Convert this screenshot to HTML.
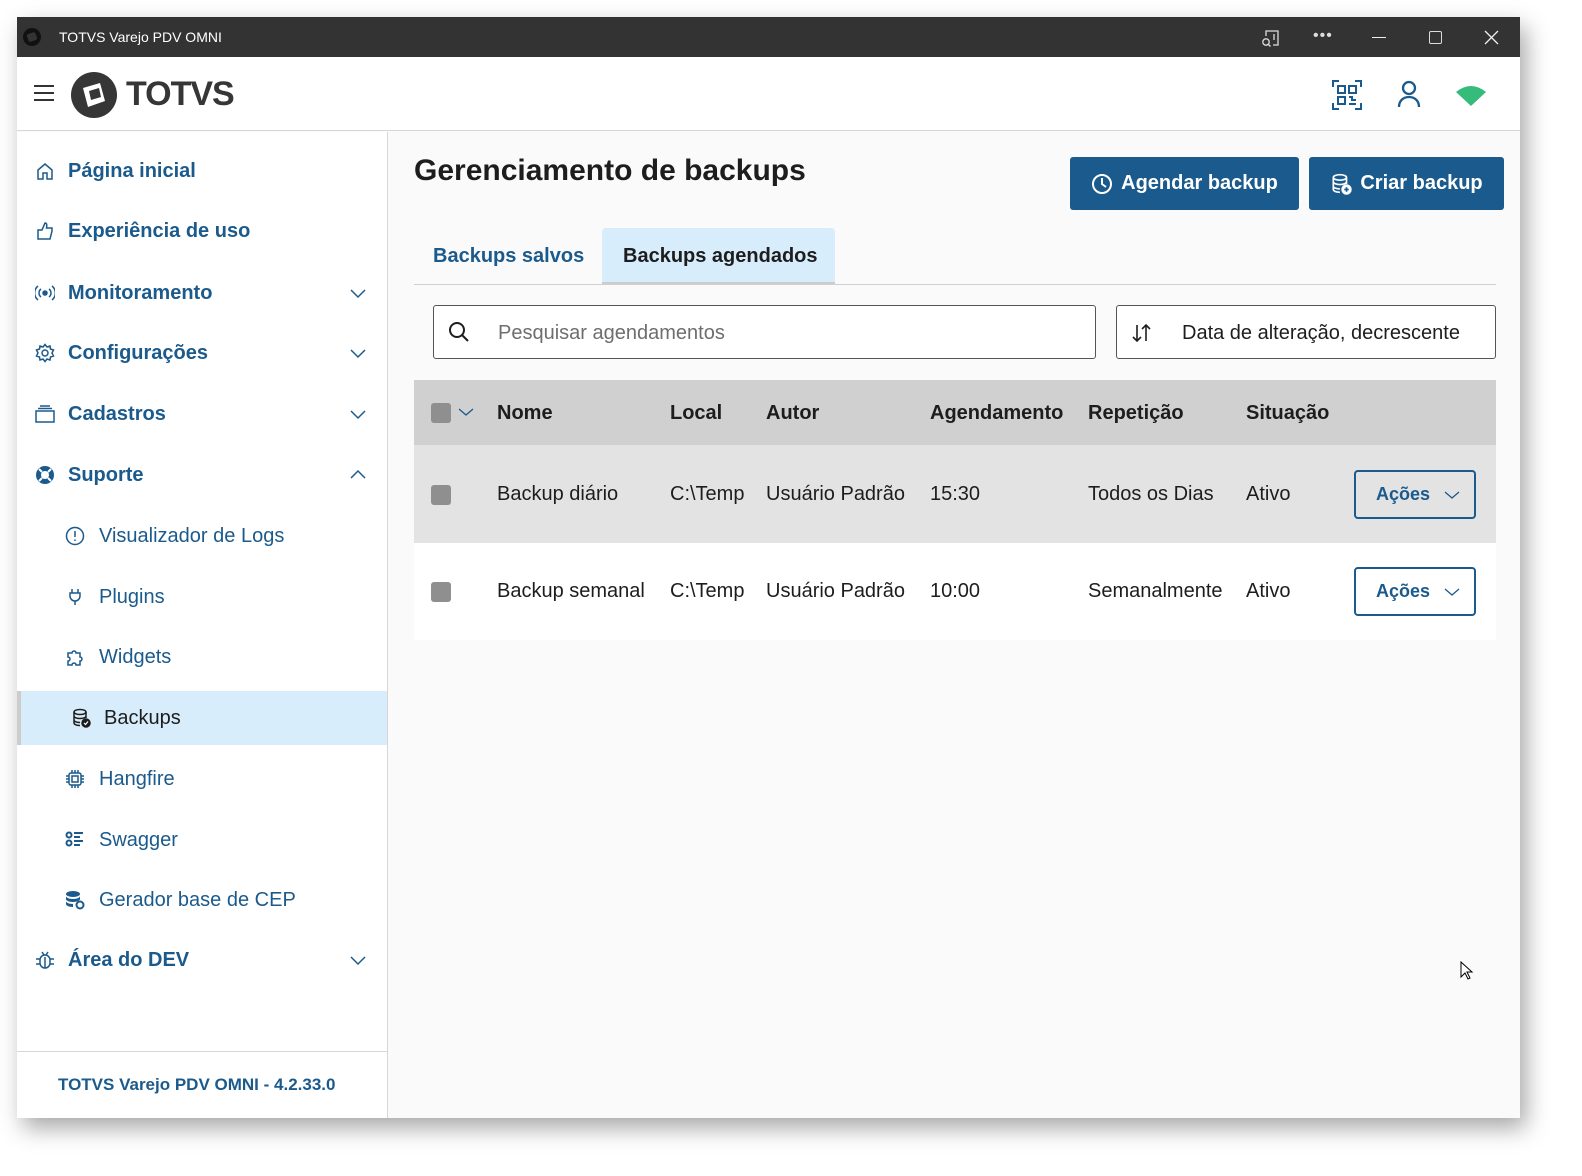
<!DOCTYPE html>
<html><head><meta charset="utf-8">
<style>
*{margin:0;padding:0;box-sizing:border-box}
body{width:1582px;height:1176px;background:#fff;position:relative;overflow:hidden;font-family:"Liberation Sans",Arial,sans-serif}
.a{position:absolute}
#win{left:17px;top:17px;width:1503px;height:1101px;background:#fafafa;box-shadow:6px 10px 22px rgba(0,0,0,.35);overflow:hidden}
#tb{left:0;top:0;width:1503px;height:40px;background:#333;color:#fff;font-size:14px}
#hd{left:0;top:40px;width:1503px;height:74px;background:#fff;border-bottom:1px solid #d6d6d6}
#sb{left:0;top:115px;width:371px;height:986px;background:#fff;border-right:1px solid #d6d6d6}
.it{position:absolute;left:0;width:370px;height:54px;display:flex;align-items:center;color:#1b5a8c;font-size:20px}
.it.b{font-weight:bold;padding-left:51px}
.it.s{padding-left:82px}
.it svg.ic{position:absolute;width:20px;height:20px}
.it.b svg.ic{left:18px}
.it.s svg.ic{left:48px}
.chev{position:absolute;left:331px;width:20px;height:20px}
.btn{position:absolute;top:140px;height:53px;background:#1b5a8c;color:#fff;border-radius:3px;font-weight:bold;font-size:20px;display:flex;align-items:center;justify-content:center;gap:8px}
.cell{position:absolute;font-size:20px;color:#1d1d1d}
.cb{position:absolute;left:414px;width:20px;height:20px;background:#8f8f8f;border-radius:3px}
.ac{position:absolute;left:1337px;width:122px;height:49px;border:2px solid #1b5a8c;border-radius:4px;color:#1b5a8c;font-weight:bold;font-size:18px;display:flex;align-items:center;padding-left:20px;gap:14px}
</style></head><body>
<div id="win" class="a">
 <div id="tb" class="a">
  <svg class="a" style="left:5px;top:10px" width="20" height="20" viewBox="0 0 20 20"><circle cx="10" cy="10" r="9" fill="#111"/><rect x="5.5" y="6" width="9" height="8" rx="2" fill="#333" transform="rotate(-20 10 10)"/></svg>
  <div class="a" style="left:42px;top:12px">TOTVS Varejo PDV OMNI</div>
  <svg class="a" style="left:1243px;top:11px" width="20" height="20" viewBox="0 0 20 20" fill="none" stroke="#ddd" stroke-width="1.3"><path d="M6 8V3h12v14h-5"/><path d="M14 6v6"/><circle cx="6" cy="14" r="3.2"/><path d="M8.5 16.5l2 2"/></svg>
  <div class="a" style="left:1296px;top:10px;font-size:16px;letter-spacing:1px;color:#ddd">•••</div>
  <div class="a" style="left:1355px;top:20px;width:14px;height:1px;background:#eee"></div>
  <div class="a" style="left:1412px;top:14px;width:13px;height:13px;border:1.3px solid #ddd;border-radius:2px"></div>
  <svg class="a" style="left:1467px;top:13px" width="15" height="15" viewBox="0 0 15 15" stroke="#eee" stroke-width="1.3"><path d="M1 1l13 13M14 1L1 14"/></svg>
 </div>
 <div id="hd" class="a">
  <div class="a" style="left:17px;top:28px;width:20px;height:2px;background:#333;box-shadow:0 7px 0 #333,0 14px 0 #333"></div>
  <svg class="a" style="left:53px;top:14px" width="48" height="48" viewBox="0 0 48 48"><circle cx="24" cy="24" r="23" fill="#363636"/><path d="M13 17l17-5 5 18-17 6z" fill="#fff"/><path d="M19 20l10-3 2 9-10 3z" fill="#363636"/></svg>
  <div class="a" style="left:109px;top:18px;font-size:34px;font-weight:bold;color:#363636;letter-spacing:-1px">TOTVS</div>
  <svg class="a" style="left:1315px;top:23px" width="30" height="30" viewBox="0 0 30 30" fill="none" stroke="#1b5a8c" stroke-width="2"><path d="M1 7V1h6M23 1h6v6M29 23v6h-6M7 29H1v-6"/><rect x="6" y="6" width="7" height="7"/><rect x="17" y="6" width="7" height="7"/><rect x="6" y="17" width="7" height="7"/><path d="M17 17h3v3h4M17 24h7"/></svg>
  <svg class="a" style="left:1380px;top:23px" width="24" height="28" viewBox="0 0 24 28" fill="none" stroke="#1b5a8c" stroke-width="2.3"><circle cx="12" cy="8" r="6"/><path d="M2 27c0-6 4-10 10-10s10 4 10 10"/></svg>
  <svg class="a" style="left:1438px;top:27px" width="32" height="22" viewBox="0 0 32 22"><path d="M1 8Q16-4 31 8L16 22z" fill="#35bb7a"/></svg>
 </div>
 <div id="sb" class="a">
  <div class="it b" style="top:12px"><svg class="ic" viewBox="0 0 20 20" fill="none" stroke="#1b5a8c" stroke-width="1.5"><path d="M3 9l7-6 7 6v9h-5v-6H8v6H3z"/></svg>Página inicial</div>
  <div class="it b" style="top:72px"><svg class="ic" viewBox="0 0 20 20" fill="none" stroke="#1b5a8c" stroke-width="1.5"><path d="M3 9h4l3-7c2 0 2 2 1.5 5H17v3l-2 8H3z"/></svg>Experiência de uso</div>
  <div class="it b" style="top:134px"><svg class="ic" viewBox="0 0 20 20" fill="none" stroke="#1b5a8c" stroke-width="1.5"><circle cx="10" cy="10" r="2" fill="#1b5a8c"/><path d="M6 6a5 5 0 000 8M14 6a5 5 0 010 8M3 3a9 9 0 000 14M17 3a9 9 0 010 14"/></svg>Monitoramento<svg class="chev" viewBox="0 0 20 20" fill="none" stroke="#1b5a8c" stroke-width="1.5"><path d="M3 7l7 7 7-7"/></svg></div>
  <div class="it b" style="top:194px"><svg class="ic" viewBox="0 0 20 20" fill="none" stroke="#1b5a8c" stroke-width="1.5"><circle cx="10" cy="10" r="3"/><path d="M10 1.5l2 2.5 3-1 .5 3 3 1-1.5 3 1.5 3-3 1-.5 3-3-1-2 2.5-2-2.5-3 1-.5-3-3-1 1.5-3-1.5-3 3-1 .5-3 3 1z"/></svg>Configurações<svg class="chev" viewBox="0 0 20 20" fill="none" stroke="#1b5a8c" stroke-width="1.5"><path d="M3 7l7 7 7-7"/></svg></div>
  <div class="it b" style="top:255px"><svg class="ic" viewBox="0 0 20 20" fill="none" stroke="#1b5a8c" stroke-width="1.5"><rect x="1" y="7" width="18" height="11"/><path d="M3 4.5h14M5 2h10"/></svg>Cadastros<svg class="chev" viewBox="0 0 20 20" fill="none" stroke="#1b5a8c" stroke-width="1.5"><path d="M3 7l7 7 7-7"/></svg></div>
  <div class="it b" style="top:316px"><svg class="ic" viewBox="0 0 20 20"><circle cx="10" cy="10" r="9" fill="#1b5a8c"/><circle cx="10" cy="10" r="4" fill="#fff"/><path d="M4 4l3 3M16 4l-3 3M4 16l3-3M16 16l-3-3" stroke="#fff" stroke-width="2"/></svg>Suporte<svg class="chev" viewBox="0 0 20 20" fill="none" stroke="#1b5a8c" stroke-width="1.5"><path d="M3 13l7-7 7 7"/></svg></div>
  <div class="it s" style="top:377px"><svg class="ic" viewBox="0 0 20 20" fill="none" stroke="#1b5a8c" stroke-width="1.5"><circle cx="10" cy="10" r="8.5"/><path d="M10 5v6M10 13.5v1.5"/></svg>Visualizador de Logs</div>
  <div class="it s" style="top:438px"><svg class="ic" viewBox="0 0 20 20" fill="none" stroke="#1b5a8c" stroke-width="1.5"><path d="M7 2v4M13 2v4M5 6h10v3a5 5 0 01-10 0zM10 14v4"/></svg>Plugins</div>
  <div class="it s" style="top:498px"><svg class="ic" viewBox="0 0 20 20" fill="none" stroke="#1b5a8c" stroke-width="1.5"><path d="M3 6h4a2 2 0 114 0h4v4a2 2 0 110 4v4h-4a2 2 0 10-4 0H3v-4a2 2 0 100-4z"/></svg>Widgets</div>
  <div class="a" style="left:0;top:559px;width:370px;height:54px;background:#d8edfb;border-left:4px solid #ccc"></div>
  <div class="it s" style="top:559px;padding-left:87px;color:#1d1d1d"><svg class="ic" style="left:54px" viewBox="0 0 20 20" fill="none" stroke="#1d1d1d" stroke-width="1.5"><ellipse cx="9" cy="4" rx="6" ry="2.5"/><path d="M3 4v11c0 1.4 2.7 2.5 6 2.5M15 4v6M3 8c0 1.4 2.7 2.5 6 2.5s6-1 6-2.5M3 12c0 1.4 2.7 2.5 6 2.5"/><circle cx="15" cy="15" r="4" fill="#1d1d1d"/><path d="M13 15l1.5 1.5 2.5-3" stroke="#fff" stroke-width="1.2"/></svg>Backups</div>
  <div class="it s" style="top:620px"><svg class="ic" viewBox="0 0 20 20" fill="none" stroke="#1b5a8c" stroke-width="1.5"><rect x="4" y="4" width="12" height="12" rx="2"/><rect x="7" y="7" width="6" height="6"/><path d="M7 1v3M10 1v3M13 1v3M7 16v3M10 16v3M13 16v3M1 7h3M1 10h3M1 13h3M16 7h3M16 10h3M16 13h3"/></svg>Hangfire</div>
  <div class="it s" style="top:681px"><svg class="ic" viewBox="0 0 20 20" fill="none" stroke="#1b5a8c" stroke-width="2"><circle cx="4" cy="5" r="2.5"/><circle cx="4" cy="13" r="2.5"/><path d="M9 3h9M9 7h6M9 11h9M9 15h6"/></svg>Swagger</div>
  <div class="it s" style="top:741px"><svg class="ic" viewBox="0 0 20 20"><ellipse cx="8" cy="4" rx="7" ry="3" fill="#1b5a8c"/><path d="M1 6v3c0 1.6 3 3 7 3s7-1.4 7-3V6c0 1.6-3 3-7 3S1 7.6 1 6zM1 11v3c0 1.6 3 3 7 3V14c-4 0-7-1.4-7-3z" fill="#1b5a8c"/><circle cx="15" cy="15" r="3.5" fill="none" stroke="#1b5a8c" stroke-width="2"/></svg>Gerador base de CEP</div>
  <div class="it b" style="top:801px"><svg class="ic" viewBox="0 0 20 20" fill="none" stroke="#1b5a8c" stroke-width="1.5"><rect x="5" y="5" width="10" height="13" rx="5"/><path d="M10 7v11M7 2l2 3M13 2l-2 3M1 9h4M15 9h4M1 14h4M15 14h4"/></svg>Área do DEV<svg class="chev" viewBox="0 0 20 20" fill="none" stroke="#1b5a8c" stroke-width="1.5"><path d="M3 7l7 7 7-7"/></svg></div>
  <div class="a" style="left:0;top:919px;width:370px;height:1px;background:#d6d6d6"></div>
  <div class="a" style="left:41px;top:943px;font-size:17px;font-weight:bold;color:#1b5a8c">TOTVS Varejo PDV OMNI - 4.2.33.0</div>
 </div>
 <div class="a" style="left:397px;top:137px;font-size:30px;font-weight:bold;color:#1d1d1d">Gerenciamento de backups</div>
 <div class="btn" style="left:1053px;width:229px"><svg width="22" height="22" viewBox="0 0 22 22" fill="none" stroke="#fff" stroke-width="2"><circle cx="11" cy="11" r="9"/><path d="M11 5v6l4 3"/></svg>Agendar backup</div>
 <div class="btn" style="left:1292px;width:195px"><svg width="22" height="22" viewBox="0 0 20 20" fill="none" stroke="#fff" stroke-width="1.5"><ellipse cx="9" cy="4" rx="6" ry="2.5"/><path d="M3 4v11c0 1.4 2.7 2.5 6 2.5M15 4v6M3 8c0 1.4 2.7 2.5 6 2.5s6-1 6-2.5M3 12c0 1.4 2.7 2.5 6 2.5"/><circle cx="15" cy="15" r="4" fill="#fff"/><path d="M15 13v4M13 15h4" stroke="#1b5a8c"/></svg>Criar backup</div>
 <div class="a" style="left:585px;top:211px;width:233px;height:57px;background:#d8edfb;border-radius:4px 4px 0 0;border-bottom:3px solid #ccc"></div>
 <div class="a" style="left:416px;top:228px;font-size:20px;font-weight:bold;color:#1b5a8c">Backups salvos</div>
 <div class="a" style="left:606px;top:228px;font-size:20px;font-weight:bold;color:#1d1d1d">Backups agendados</div>
 <div class="a" style="left:397px;top:267px;width:1082px;height:1px;background:#d0d0d0"></div>
 <div class="a" style="left:416px;top:288px;width:663px;height:54px;border:1px solid #555;border-radius:3px;background:#fff"></div>
 <svg class="a" style="left:431px;top:304px" width="22" height="22" viewBox="0 0 22 22" fill="none" stroke="#1d1d1d" stroke-width="2"><circle cx="9" cy="9" r="7"/><path d="M14 14l6 6"/></svg>
 <div class="a" style="left:481px;top:305px;font-size:20px;color:#6e6e6e">Pesquisar agendamentos</div>
 <div class="a" style="left:1099px;top:288px;width:380px;height:54px;border:1px solid #555;border-radius:3px;background:#fff"></div>
 <svg class="a" style="left:1114px;top:305px" width="22" height="22" viewBox="0 0 22 22" fill="none" stroke="#1d1d1d" stroke-width="1.6"><path d="M6 3v16M2 15l4 4 4-4M15 19V3M11 7l4-4 4 4"/></svg>
 <div class="a" style="left:1165px;top:305px;font-size:20px;color:#1d1d1d">Data de alteração, decrescente</div>
 <div class="a" style="left:397px;top:363px;width:1082px;height:65px;background:#d0d0d0"></div>
 <div class="a" style="left:397px;top:428px;width:1082px;height:98px;background:#e3e3e3"></div>
 <div class="a" style="left:397px;top:526px;width:1082px;height:97px;background:#fff"></div>
 <div class="cb" style="top:386px"></div>
 <svg class="a" style="left:441px;top:389px" width="16" height="12" viewBox="0 0 16 12" fill="none" stroke="#1b5a8c" stroke-width="1.3"><path d="M1 3l7 6 7-6"/></svg>
 <div class="cell" style="left:480px;top:385px;font-weight:bold">Nome</div>
 <div class="cell" style="left:653px;top:385px;font-weight:bold">Local</div>
 <div class="cell" style="left:749px;top:385px;font-weight:bold">Autor</div>
 <div class="cell" style="left:913px;top:385px;font-weight:bold">Agendamento</div>
 <div class="cell" style="left:1071px;top:385px;font-weight:bold">Repetição</div>
 <div class="cell" style="left:1229px;top:385px;font-weight:bold">Situação</div>
 <div class="cb" style="top:468px"></div>
 <div class="cell" style="left:480px;top:466px">Backup diário</div>
 <div class="cell" style="left:653px;top:466px">C:\Temp</div>
 <div class="cell" style="left:749px;top:466px">Usuário Padrão</div>
 <div class="cell" style="left:913px;top:466px">15:30</div>
 <div class="cell" style="left:1071px;top:466px">Todos os Dias</div>
 <div class="cell" style="left:1229px;top:466px">Ativo</div>
 <div class="ac" style="top:453px">Ações<svg width="16" height="12" viewBox="0 0 16 12" fill="none" stroke="#1b5a8c" stroke-width="1.3"><path d="M1 3l7 6 7-6"/></svg></div>
 <div class="cb" style="top:565px"></div>
 <div class="cell" style="left:480px;top:563px">Backup semanal</div>
 <div class="cell" style="left:653px;top:563px">C:\Temp</div>
 <div class="cell" style="left:749px;top:563px">Usuário Padrão</div>
 <div class="cell" style="left:913px;top:563px">10:00</div>
 <div class="cell" style="left:1071px;top:563px">Semanalmente</div>
 <div class="cell" style="left:1229px;top:563px">Ativo</div>
 <div class="ac" style="top:550px">Ações<svg width="16" height="12" viewBox="0 0 16 12" fill="none" stroke="#1b5a8c" stroke-width="1.3"><path d="M1 3l7 6 7-6"/></svg></div>
 <svg class="a" style="left:1443px;top:944px" width="14" height="20" viewBox="0 0 14 20"><path d="M1 1v15l4-4 3 6 2-1-3-6h5z" fill="#fff" stroke="#000" stroke-width="1"/></svg>
</div>
</body></html>
